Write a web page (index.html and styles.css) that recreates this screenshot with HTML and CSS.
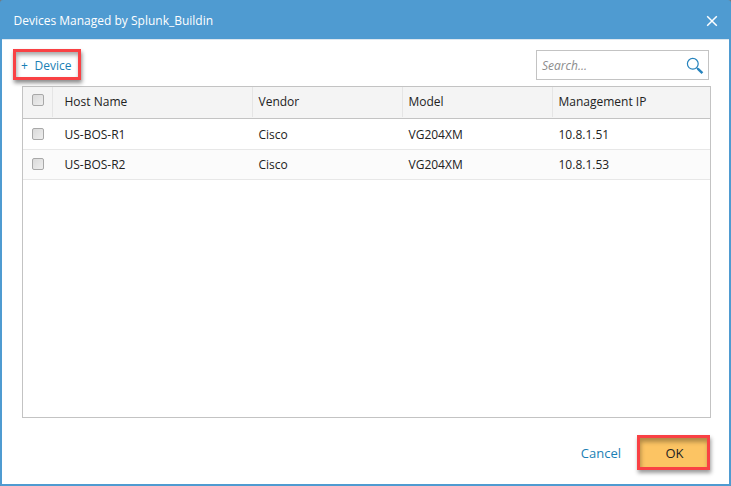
FILE: index.html
```html
<!DOCTYPE html>
<html lang="en">
<head>
<meta charset="utf-8">
<title>Devices Managed by Splunk_Buildin</title>
<link rel="stylesheet" href="styles.css">
</head>
<body>
<div class="dialog">
  <header class="titlebar">
    <span class="title">Devices Managed by Splunk_Buildin</span>
    <svg class="close" width="12" height="12" viewBox="0 0 12 12"><path d="M1.2 1.2 10.8 10.8M10.8 1.2 1.2 10.8"/></svg>
  </header>
  <main class="content">
    <div class="toolbar">
      <a class="add"><span class="plus">+</span><span class="add-label">Device</span></a>
      <div class="search">
        <span class="placeholder">Search...</span>
        <svg width="18" height="18" viewBox="0 0 18 18"><circle cx="6.8" cy="6.8" r="5.4"/><path class="neck" d="M10.6 10.6 12 12"/><path class="handle" d="M11.7 11.7 16.4 16.2"/></svg>
      </div>
    </div>
    <div class="grid">
      <div class="row head"><div class="check"><i></i></div><div>Host Name</div><div>Vendor</div><div>Model</div><div>Management IP</div></div>
      <div class="row"><div class="check"><i></i></div><div>US-BOS-R1</div><div>Cisco</div><div>VG204XM</div><div>10.8.1.51</div></div>
      <div class="row alt"><div class="check"><i></i></div><div>US-BOS-R2</div><div>Cisco</div><div>VG204XM</div><div>10.8.1.53</div></div>
    </div>
    <footer class="actions">
      <a class="cancel">Cancel</a>
      <div class="ok">OK</div>
    </footer>
  </main>
</div>
</body>
</html>
```
FILE: styles.css
```css
* { box-sizing: border-box; }
body {
  margin: 0;
  background: #73797e;
  font-family: "Open Sans", sans-serif;
  font-size: 12px;
  color: #222;
}
.dialog {
  width: 731px;
  height: 486px;
  padding: 0 2px 2px;
  background: #4f9bd1;
  border-radius: 3px 3px 1px 1px;
  display: flex;
  flex-direction: column;
}
.titlebar {
  height: 39px;
  flex: none;
  display: flex;
  align-items: center;
  justify-content: space-between;
  padding: 1px 11px 0 11.5px;
  color: #fff;
}
.close { stroke: #fff; stroke-width: 1.5; fill: none; margin-top: 2px; }
.content {
  flex: 1;
  background: #fff;
  border-top: 1px solid #dce7ef;
  padding: 9px 18px 0 11px;
}
.toolbar { display: flex; justify-content: space-between; height: 37px; }
.add {
  width: 68px;
  height: 31px;
  border: 3px solid #f94144;
  box-shadow: 1px 3px 4px rgba(0,0,0,.45), inset 1px 3px 4px rgba(0,0,0,.35);
  display: flex;
  align-items: center;
  padding: 2px 0 0 5px;
  color: #1a7fb5;
}
.plus { width: 13.5px; }
.search {
  width: 173px;
  height: 30px;
  margin: 1px 2px 0 0;
  border: 1px solid #c3c3c3;
  display: flex;
  align-items: center;
  justify-content: space-between;
  padding: 0 4px 0 5px;
}
.placeholder { font-style: italic; color: #8c8c8c; }
.search svg { fill: none; stroke: #2683bd; stroke-width: 1.2; margin-top: 2px; }
.search .handle { stroke-width: 2.5; }
.grid {
  margin-left: 9px;
  width: 689px;
  height: 332px;
  border: 1px solid #c3c3c3;
}
.row {
  display: grid;
  grid-template-columns: 29px 200px 150px 150px 1fr;
  height: 30px;
  line-height: 30px;
  border-bottom: 1px solid #e7e7e7;
}
.row > div { padding-left: 6.5px; }
.row > div:nth-child(2) { padding-left: 12.5px; }
.head + .row { height: 31px; line-height: 31px; }
.head {
  height: 32px;
  line-height: 30px;
  background: #f4f4f4;
  border-color: #c3c3c3;
}
.head > div + div { border-left: 1px solid #e5e5e5; padding-left: 5.5px; height: 30px; }
.head > div:nth-child(2) { padding-left: 11.5px; }
.alt { background: #fbfbfb; }
.row .check { display: flex; align-items: center; padding: 0 0 2px 9px; }
.head .check { padding-bottom: 0; height: 26px; }
.check i {
  flex: none;
  width: 12px;
  height: 12px;
  border: 1px solid #a8a8a8;
  border-radius: 2px;
  background: linear-gradient(135deg, #dadada, #eee);
}
.actions {
  display: flex;
  justify-content: flex-end;
  align-items: center;
  margin: 17px 1px 0 0;
}
.cancel { color: #1a7fb5; font-size: 13px; margin-right: 16px; }
.ok {
  width: 73px;
  height: 35px;
  border: 3px solid #f94144;
  background: #fcc463;
  box-shadow: 1px 3px 4px rgba(0,0,0,.4), inset 1px 4px 4px rgba(0,0,0,.3);
  display: flex;
  align-items: center;
  justify-content: center;
  font-size: 13px;
  padding-left: 2px;
}
```
